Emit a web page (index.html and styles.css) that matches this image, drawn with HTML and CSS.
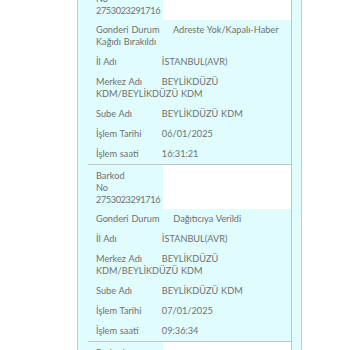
FILE: index.html
```html
<!DOCTYPE html>
<html lang="tr">
<head>
    <meta charset="UTF-8">
    <meta name="viewport" content="width=device-width, initial-scale=1.0">
    <title>Gönderi Hareketleri</title>
    <link rel="stylesheet" href="styles.css">
</head>
<body>

    <div class="panel">

        <div class="card">
            <div class="head">
                <div class="barcode">Barkod<br>No<br><span class="num">2753023291716</span></div>
                <div class="blank"></div>
            </div>
            <div class="row"><span class="k">Gonderi Durum</span> Adreste Yok/Kapalı-Haber Kağıdı Bırakıldı</div>
            <div class="row"><span class="k">İl Adı</span> İSTANBUL(AVR)</div>
            <div class="row"><span class="k">Merkez Adı</span> BEYLİKDÜZÜ KDM/BEYLİKDÜZÜ KDM</div>
            <div class="row"><span class="k">Sube Adı</span> BEYLİKDÜZÜ KDM</div>
            <div class="row"><span class="k">İşlem Tarihi</span> 06/01/2025</div>
            <div class="row"><span class="k">İşlem saati</span> 16:31:21</div>
        </div>

        <div class="card">
            <div class="head">
                <div class="barcode">Barkod<br>No<br><span class="num">2753023291716</span></div>
                <div class="blank"></div>
            </div>
            <div class="row"><span class="k">Gonderi Durum</span> Dağıtıcıya Verildi</div>
            <div class="row"><span class="k">İl Adı</span> İSTANBUL(AVR)</div>
            <div class="row"><span class="k">Merkez Adı</span> BEYLİKDÜZÜ KDM/BEYLİKDÜZÜ KDM</div>
            <div class="row"><span class="k">Sube Adı</span> BEYLİKDÜZÜ KDM</div>
            <div class="row"><span class="k">İşlem Tarihi</span> 07/01/2025</div>
            <div class="row"><span class="k">İşlem saati</span> 09:36:34</div>
        </div>

        <div class="card">
            <div class="head">
                <div class="barcode">Barkod<br>No<br><span class="num">2753023291716</span></div>
                <div class="blank"></div>
            </div>
        </div>

    </div>

</body>
</html>
```

FILE: styles.css
```css
/* movement history list, light cyan panel with stacked record cards */
html, body { margin: 0; padding: 0; background: #fff; }
body { font-family: Lato, "Open Sans", sans-serif; font-size: 9.2px; color: #707070; }

.panel { width: 204px; margin: -25px 0 0 77px; padding: 0 9px 0 10px; background: #e0fcfc; border-left: 1px solid #c9c9c9; border-right: 1px solid #c9c9c9; }

.card { border-top: 1px solid #c4c4c4; border-right: 1px solid #c4c4c4; }

.head { display: flex; }
.barcode { width: 67px; padding: 5px 0 3px 8px; line-height: 12px; }
.num { letter-spacing: -0.4px; }
.blank { flex: 1; background: #fff; }

.row { padding: 4px 8px; line-height: 12px; word-spacing: 0.5px; }
.k { display: inline-block; min-width: 52px; margin-right: 11px; }
```
